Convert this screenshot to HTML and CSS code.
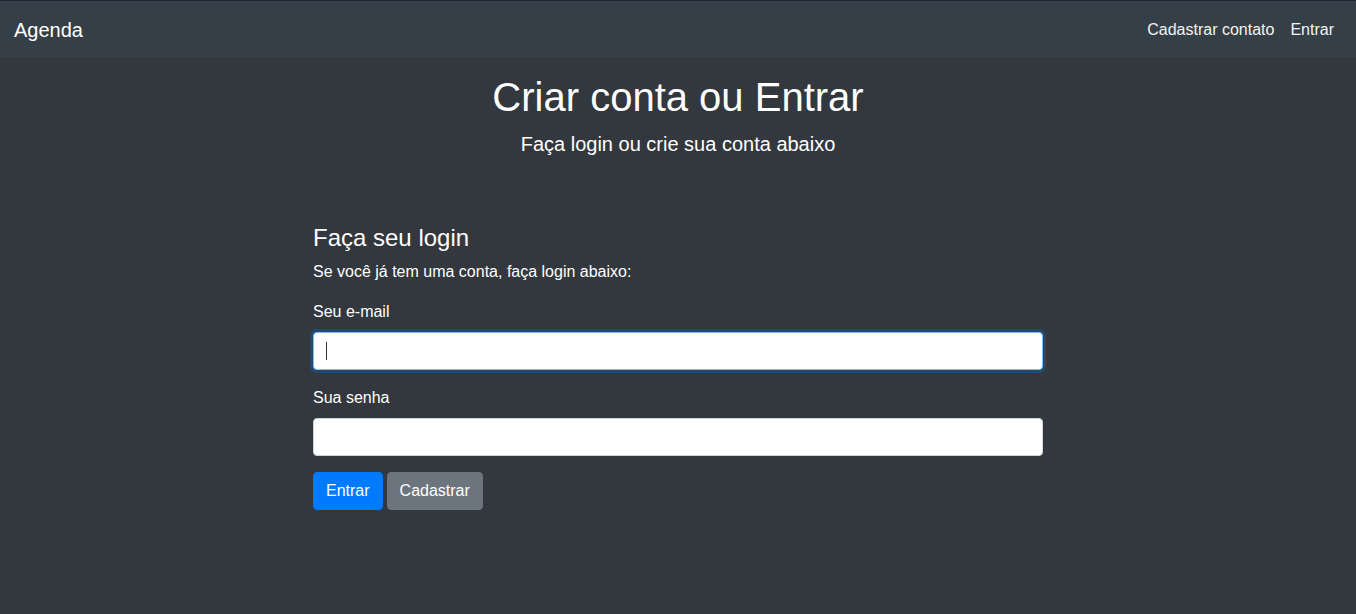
FILE: index.html
```html
<!DOCTYPE html>
<html lang="pt-BR">
<head>
<meta charset="utf-8">
<title>Agenda</title>
<link rel="stylesheet" href="styles.css">
</head>
<body>
<nav class="navbar">
  <a class="brand" href="#">Agenda</a>
  <ul class="nav">
    <li><a class="nav-link" href="#">Cadastrar contato</a></li>
    <li><a class="nav-link" href="#">Entrar</a></li>
  </ul>
</nav>
<main class="container">
  <header class="hero">
    <h1 class="title">Criar conta ou Entrar</h1>
    <p class="lead">Faça login ou crie sua conta abaixo</p>
  </header>
  <section class="login">
    <h4 class="login-title">Faça seu login</h4>
    <p class="login-text">Se você já tem uma conta, faça login abaixo:</p>
    <form class="form">
      <div class="form-group">
        <label class="label" for="email">Seu e-mail</label>
        <div class="input-wrap caret">
          <input class="input input-focus" id="email" type="email">
        </div>
      </div>
      <div class="form-group">
        <label class="label" for="senha">Sua senha</label>
        <input class="input" id="senha" type="password">
      </div>
      <div class="buttons">
        <button class="btn btn-primary" type="button">Entrar</button>
        <button class="btn btn-secondary" type="button">Cadastrar</button>
      </div>
    </form>
  </section>
</main>
</body>
</html>
```
FILE: styles.css
```css
* { box-sizing: border-box; }
html, body { margin: 0; padding: 0; }
body {
  background: #33373e;
  color: #fff;
  font-family: "Liberation Sans", Arial, sans-serif;
  font-size: 16px;
  line-height: 1.5;
  height: 614px;
  overflow: hidden;
}
.navbar {
  display: flex;
  align-items: center;
  justify-content: space-between;
  background: #353f47;
  border-top: 1px solid #1c2630;
  padding: 9px 14px 7px 14px;
  height: 57px;
}
.brand {
  color: #fff;
  text-decoration: none;
  font-size: 20px;
  line-height: 30px;
  padding: 5px 0;
}
.nav {
  list-style: none;
  display: flex;
  margin: 0;
  padding: 0;
}
.nav-link {
  display: block;
  color: #f2f3f4;
  text-decoration: none;
  padding: 8px 8px;
  line-height: 24px;
}
.container {
  width: 730px;
  margin: 0 auto;
}
.hero {
  text-align: center;
  padding-top: 16px;
  margin-bottom: 64px;
}
.title {
  margin: 0 0 8px;
  font-size: 40px;
  font-weight: 400;
  line-height: 48px;
}
.lead {
  margin: 0;
  font-size: 20px;
  line-height: 30px;
}
.login-title {
  margin: 0 0 8px;
  font-size: 24px;
  font-weight: 400;
  line-height: 29px;
}
.login-text {
  margin: 0 0 16px;
}
.form { margin: 0; }
.form-group { margin-bottom: 16px; }
.label {
  display: block;
  margin-bottom: 8px;
}
.input-wrap { position: relative; }
.caret::after {
  content: "";
  position: absolute;
  left: 13px;
  top: 10px;
  width: 1px;
  height: 18px;
  background: #333;
}
.input {
  display: block;
  width: 100%;
  height: 38px;
  padding: 6px 12px;
  font-family: inherit;
  font-size: 16px;
  color: #495057;
  background: #fff;
  border: 1px solid #ced4da;
  border-radius: 4px;
  outline: none;
}
.input-focus, .input:focus {
  border-color: #80bdff;
  box-shadow: 0 0 0 3px rgba(0, 123, 255, 0.25);
}
.buttons {
  display: flex;
  gap: 4px;
}
.btn {
  font-family: inherit;
  font-size: 16px;
  line-height: 24px;
  padding: 6px 12px;
  border: 1px solid transparent;
  border-radius: 4px;
  color: #fff;
  cursor: pointer;
}
.btn-primary { background: #007bff; border-color: #007bff; }
.btn-secondary { background: #6c757d; border-color: #6c757d; }
```
